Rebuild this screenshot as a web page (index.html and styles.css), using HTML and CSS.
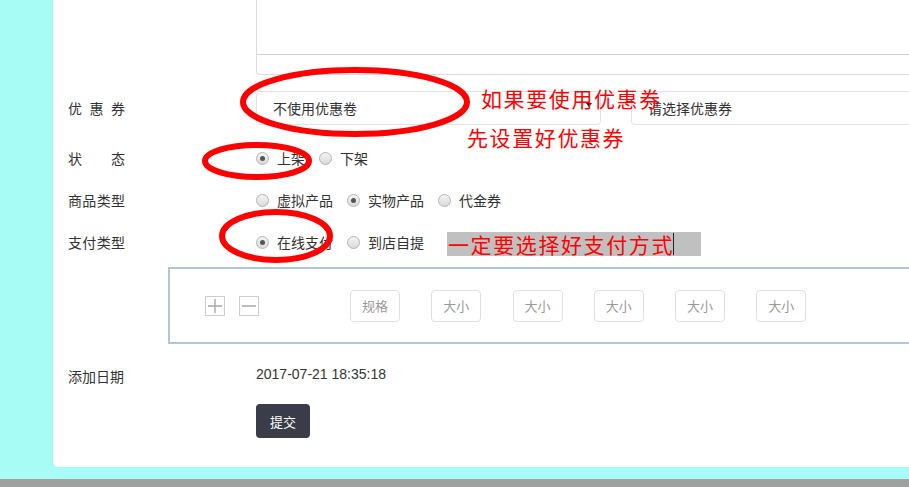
FILE: index.html
```html
<!DOCTYPE html>
<html lang="zh-CN">
<head>
<meta charset="utf-8">
<title>商品编辑</title>
<link rel="stylesheet" href="styles.css">
</head>
<body>
<div class="page">
  <div class="panel">
    <div class="editor">
      <div class="editor-body"></div>
      <div class="editor-foot"></div>
    </div>

    <div class="row coupon-row">
      <span class="lbl">优惠券</span>
      <div class="select s1"><span>不使用优惠卷</span><i class="caret"></i></div>
      <div class="select s2"><span>请选择优惠券</span></div>
    </div>

    <div class="row radio-row first">
      <span class="lbl">状态</span>
      <div class="opts">
        <span class="radio on"></span><span class="opt">上架</span>
        <span class="radio"></span><span class="opt">下架</span>
      </div>
    </div>

    <div class="row radio-row">
      <span class="lbl">商品类型</span>
      <div class="opts">
        <span class="radio"></span><span class="opt">虚拟产品</span>
        <span class="radio on"></span><span class="opt">实物产品</span>
        <span class="radio"></span><span class="opt">代金券</span>
      </div>
    </div>

    <div class="row radio-row">
      <span class="lbl">支付类型</span>
      <div class="opts">
        <span class="radio on"></span><span class="opt">在线支付</span>
        <span class="radio"></span><span class="opt">到店自提</span>
      </div>
    </div>

    <div class="spec">
      <span class="icon-btn">
        <svg width="18" height="18" viewBox="0 0 18 18"><path d="M2 9H16M9 2V16" stroke="#a8a8a8" stroke-width="1.4" fill="none"/></svg>
      </span>
      <span class="icon-btn minus">
        <svg width="18" height="18" viewBox="0 0 18 18"><path d="M2 9H16" stroke="#a8a8a8" stroke-width="1.6" fill="none"/></svg>
      </span>
      <div class="tags">
        <span class="tag">规格</span>
        <span class="tag">大小</span>
        <span class="tag">大小</span>
        <span class="tag">大小</span>
        <span class="tag">大小</span>
        <span class="tag">大小</span>
      </div>
    </div>

    <div class="row date-row">
      <span class="lbl plain">添加日期</span>
      <span class="date">2017-07-21 18:35:18</span>
    </div>

    <div class="row btn-row">
      <button class="submit">提交</button>
    </div>
  </div>

  <svg class="marks" width="909" height="487" viewBox="0 0 909 487">
    <ellipse cx="355" cy="102" rx="112" ry="32" fill="none" stroke="#ff0000" stroke-width="6"/>
    <ellipse cx="257" cy="161" rx="52" ry="16" fill="none" stroke="#ff0000" stroke-width="6"/>
    <ellipse cx="276" cy="236" rx="54" ry="24" fill="none" stroke="#ff0000" stroke-width="6"/>
  </svg>
  <div class="note n1">如果要使用优惠券</div>
  <div class="note n2">先设置好优惠券</div>
  <div class="note n3">一定要选择好支付方式<i class="cursor"></i></div>
</div>
<div class="bottom-bar"></div>
</body>
</html>
```

FILE: styles.css
```css
html, body {
  margin: 0;
  padding: 0;
  overflow: hidden;
}
body {
  background: #a8fcf6;
  font-family: "Liberation Sans", "Noto Sans CJK SC", sans-serif;
  font-size: 14px;
  color: #333;
}
.page {
  position: relative;
  padding-left: 53px;
  padding-bottom: 12px;
}
.panel {
  background: #fff;
  border-bottom-left-radius: 5px;
  padding: 0 0 29px 15px;
  overflow: hidden;
}
.editor {
  box-sizing: border-box;
  margin-left: 188px;
  margin-right: -20px;
  height: 75px;
  border-left: 1px solid #dcdcdc;
  border-bottom: 1px solid #dcdcdc;
  border-bottom-left-radius: 4px;
  display: flex;
  flex-direction: column;
}
.editor-body {
  height: 54px;
}
.editor-foot {
  flex: 1;
  border-top: 1px solid #cfcfcf;
}
.row {
  display: flex;
  align-items: center;
}
.lbl {
  width: 57px;
  margin-right: 131px;
  text-align: justify;
  text-align-last: justify;
  flex: none;
}
.lbl.plain {
  text-align: left;
  text-align-last: auto;
  padding-top: 3px;
}
.coupon-row {
  margin-top: 16px;
  height: 34px;
}
.select {
  box-sizing: border-box;
  height: 34px;
  border: 1px solid #e2e2e2;
  border-radius: 4px;
  padding: 0 8px 0 16px;
  display: flex;
  align-items: center;
  justify-content: space-between;
}
.s1 {
  width: 345px;
  flex: none;
}
.s2 {
  margin-left: 30px;
  width: 345px;
  flex: none;
  padding-left: 16px;
}
.caret {
  width: 0;
  height: 0;
  border-left: 3px solid transparent;
  border-right: 3px solid transparent;
  border-top: 4px solid #111;
  margin-bottom: 6px;
}
.radio-row {
  height: 42px;
}
.radio-row.first {
  margin-top: 12px;
}
.opts {
  display: flex;
  align-items: center;
}
.radio {
  box-sizing: border-box;
  width: 13px;
  height: 13px;
  border-radius: 50%;
  border: 1px solid #b4b4b4;
  background: linear-gradient(#f4f4f4, #dadada);
  margin-right: 8px;
  display: flex;
  align-items: center;
  justify-content: center;
}
.radio.on::after {
  content: "";
  width: 5px;
  height: 5px;
  border-radius: 50%;
  background: #555;
}
.opt {
  margin-right: 14px;
}
.spec {
  box-sizing: border-box;
  margin: 4px -20px 0 100px;
  height: 77px;
  border: 2px solid #b1c5df;
  border-right: none;
  display: flex;
  align-items: center;
  padding-left: 35px;
}
.icon-btn {
  box-sizing: border-box;
  width: 20px;
  height: 20px;
  border: 1px solid #cccccc;
  display: flex;
  align-items: center;
  justify-content: center;
}
.icon-btn.minus {
  margin-left: 14px;
}
.tags {
  display: flex;
  gap: 31.25px;
  margin-left: 91px;
}
.tag {
  box-sizing: border-box;
  width: 50px;
  height: 32px;
  border: 1px solid #e0e0e0;
  border-radius: 4px;
  display: flex;
  align-items: center;
  justify-content: center;
  font-size: 13px;
  color: #9a9a9a;
}
.date-row {
  margin-top: 20px;
  height: 20px;
  align-items: flex-start;
}
.date {
  line-height: 20px;
  font-size: 14px;
}
.date-row .lbl {
  line-height: 20px;
}
.btn-row {
  margin-top: 20px;
  padding-left: 188px;
}
.submit {
  height: 34px;
  width: 54px;
  border: none;
  border-radius: 4px;
  background: #3a3d49;
  color: #fff;
  font-family: "Liberation Sans", "Noto Sans CJK SC", sans-serif;
  font-size: 13px;
  padding: 0;
}
.bottom-bar {
  height: 8px;
  background: #a0a0a0;
}
.marks {
  position: absolute;
  left: 0;
  top: 0;
  pointer-events: none;
}
.note {
  position: absolute;
  color: #ff0000;
  font-family: "Noto Sans CJK SC", sans-serif;
  font-size: 21px;
  line-height: 24px;
  letter-spacing: 1.6px;
  white-space: nowrap;
}
.n1 {
  left: 481px;
  top: 86px;
}
.n2 {
  left: 467px;
  top: 125px;
}
.n3 {
  left: 447px;
  top: 232px;
  width: 254px;
  height: 24px;
  padding-left: 1px;
  box-sizing: border-box;
  background: #c0c0c0;
  display: flex;
  align-items: center;
}
.cursor {
  display: inline-block;
  width: 1px;
  height: 22px;
  background: #222;
  margin-left: -1px;
}
```
